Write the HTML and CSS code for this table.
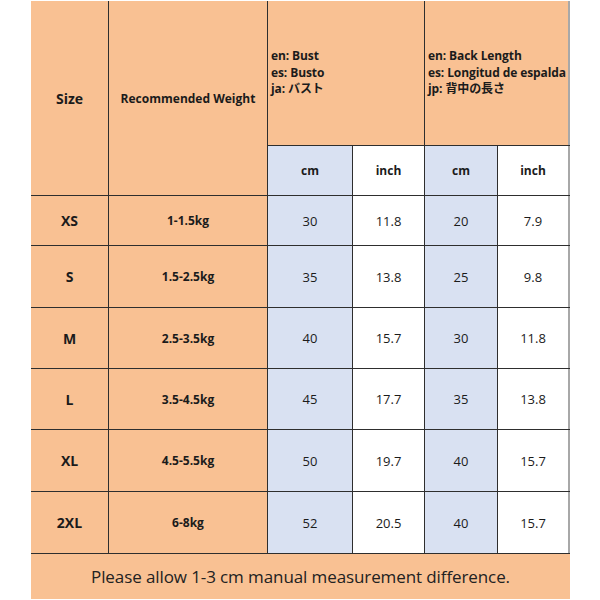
FILE: index.html
```html
<!DOCTYPE html>
<html>
<head>
<meta charset="utf-8">
<link rel="stylesheet" href="styles.css">
</head>
<body>
<div class="chart">
  <div class="grid">
    <div class="cell hd span2 big">Size</div>
    <div class="cell hd span2 med">Recommended Weight</div>
    <div class="cell hd multi cols2"><span>en: Bust</span><span>es: Busto</span><span>ja: バスト</span></div>
    <div class="cell hd multi cols2 last"><span>en: Back Length</span><span>es: Longitud de espalda</span><span>jp: 背中の長さ</span></div>
    <div class="cell blue unit">cm</div>
    <div class="cell white unit">inch</div>
    <div class="cell blue unit">cm</div>
    <div class="cell white unit last">inch</div>

    <div class="cell hd size">XS</div><div class="cell hd wt">1-1.5kg</div>
    <div class="cell blue num">30</div><div class="cell white num">11.8</div><div class="cell blue num">20</div><div class="cell white num last">7.9</div>

    <div class="cell hd size">S</div><div class="cell hd wt">1.5-2.5kg</div>
    <div class="cell blue num">35</div><div class="cell white num">13.8</div><div class="cell blue num">25</div><div class="cell white num last">9.8</div>

    <div class="cell hd size">M</div><div class="cell hd wt">2.5-3.5kg</div>
    <div class="cell blue num">40</div><div class="cell white num">15.7</div><div class="cell blue num">30</div><div class="cell white num last">11.8</div>

    <div class="cell hd size">L</div><div class="cell hd wt">3.5-4.5kg</div>
    <div class="cell blue num">45</div><div class="cell white num">17.7</div><div class="cell blue num">35</div><div class="cell white num last">13.8</div>

    <div class="cell hd size">XL</div><div class="cell hd wt">4.5-5.5kg</div>
    <div class="cell blue num">50</div><div class="cell white num">19.7</div><div class="cell blue num">40</div><div class="cell white num last">15.7</div>

    <div class="cell hd size">2XL</div><div class="cell hd wt">6-8kg</div>
    <div class="cell blue num">52</div><div class="cell white num">20.5</div><div class="cell blue num">40</div><div class="cell white num last">15.7</div>

    <div class="cell hd footer">Please allow 1-3 cm manual measurement difference.</div>
  </div>
</div>
</body>
</html>
```

FILE: styles.css
```css
html, body {
  margin: 0;
  padding: 0;
  background: #ffffff;
}

.chart {
  padding: 1px 0 0 31px;
}

.grid {
  display: grid;
  width: 539px;
  grid-template-columns: 77px 158px 84px 71px 72px 72px;
  grid-template-rows: 144px 49px 49px 61px 60px 60px 61px 61px 45px;
  gap: 1px;
  background: #2e2e2e;
  font-family: "Open Sans", "Noto Sans CJK JP", sans-serif;
  color: #1b1b1b;
}

.cell {
  display: flex;
  align-items: center;
  justify-content: center;
  text-align: center;
  box-sizing: border-box;
}

.hd {
  background: #f9c193;
}

.blue {
  background: #d9e1f2;
}

.white {
  background: #ffffff;
}

.last {
  border-right: 2px solid #a8a8a8;
}

.span2 {
  grid-row: span 2;
}

.cols2 {
  grid-column: span 2;
}

.big {
  font-size: 14px;
  font-weight: 700;
}

.med {
  font-size: 12px;
  font-weight: 700;
}

.multi {
  flex-direction: column;
  align-items: flex-start;
  justify-content: center;
  text-align: left;
  padding-left: 3px;
  font-size: 12px;
  font-weight: 700;
  line-height: 16.5px;
  letter-spacing: -0.1px;
}

.unit {
  font-size: 12px;
  font-weight: 700;
}

.size {
  font-size: 14px;
  font-weight: 700;
}

.wt {
  font-size: 12px;
  font-weight: 700;
}

.num {
  font-size: 13px;
  font-weight: 400;
}

.footer {
  grid-column: span 6;
  font-size: 17px;
  font-weight: 400;
  color: #222;
  letter-spacing: -0.1px;
}
```
